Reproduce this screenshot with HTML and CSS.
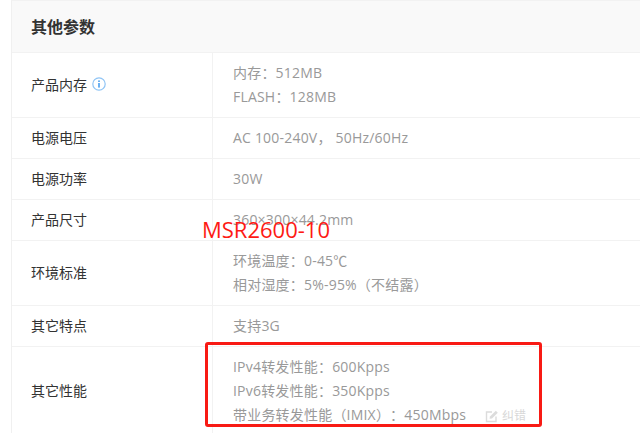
FILE: index.html
```html
<!DOCTYPE html>
<html lang="zh-CN">
<head>
<meta charset="utf-8">
<title>其他参数</title>
<link rel="stylesheet" href="styles.css">
</head>
<body>
<main class="panel">
  <h2 class="panel-title">其他参数</h2>
  <div class="row row-2">
    <div class="key">产品内存
      <svg class="info" viewBox="0 0 14 14" width="14" height="14" aria-hidden="true"><circle cx="7" cy="7" r="6.2" fill="none" stroke="#8fc4f5" stroke-width="1.2"/><rect x="6.2" y="6" width="1.6" height="4.6" fill="#4a9fee"/><rect x="6.2" y="3.4" width="1.6" height="1.6" fill="#4a9fee"/></svg>
    </div>
    <div class="val"><p>内存：512MB</p><p>FLASH：128MB</p></div>
  </div>
  <div class="row"><div class="key">电源电压</div><div class="val"><p>AC 100-240V<span class="comma">，</span>50Hz/60Hz</p></div></div>
  <div class="row"><div class="key">电源功率</div><div class="val"><p>30W</p></div></div>
  <div class="row"><div class="key">产品尺寸</div><div class="val"><p>360×300×44.2mm</p></div></div>
  <div class="row row-2"><div class="key">环境标准</div><div class="val"><p>环境温度：0-45℃</p><p>相对湿度：5%-95%（不结露）</p></div></div>
  <div class="row"><div class="key">其它特点</div><div class="val"><p>支持3G</p></div></div>
  <div class="row row-3"><div class="key">其它性能</div>
    <div class="val">
      <p>IPv4转发性能：600Kpps</p>
      <p>IPv6转发性能：350Kpps</p>
      <p class="last">带业务转发性能（IMIX）：450Mbps
        <span class="fix"><svg viewBox="0 0 14 14" width="14" height="14" aria-hidden="true"><path d="M11 7.5V12.5H1.5V3H7" fill="none" stroke="#dcdcdc" stroke-width="1.4"/><path d="M4.5 9.8 5 7.5 10.8 1.7 12.8 3.7 7 9.4Z" fill="#dcdcdc"/></svg>纠错</span>
      </p>
    </div>
  </div>
</main>
<div class="note-label">MSR2600-10</div>
<div class="note-box"></div>
</body>
</html>
```
FILE: styles.css
```css
html, body { margin: 0; padding: 0; }
body {
  width: 640px;
  height: 433px;
  overflow: hidden;
  position: relative;
  background: #fff;
  font-family: "Open Sans", "Noto Sans CJK SC", sans-serif;
  text-spacing-trim: space-all;
}
.panel {
  margin-left: 11px;
  border-left: 1px solid #f0f0f0;
  border-top: 1px solid #f2f2f2;
}
.panel-title {
  margin: 0;
  height: 51px;
  line-height: 53px;
  padding-left: 19px;
  font-size: 16px;
  font-weight: 700;
  color: #333;
  background: #f9f9f9;
  border-bottom: 1px solid #f2f2f2;
}
.row {
  display: flex;
  height: 40px;
  border-bottom: 1px solid #f2f2f2;
  font-size: 14px;
}
.row-2 { height: 64px; }
.row-3 { height: 88px; border-bottom: 0; }
.key {
  width: 201px;
  box-sizing: border-box;
  flex: none;
  padding: 0 0 2px 19px;
  border-right: 1px solid #f2f2f2;
  display: flex;
  align-items: center;
  gap: 5px;
  color: #333;
}
.val {
  flex: 1;
  padding-left: 20px;
  display: flex;
  flex-direction: column;
  justify-content: center;
  color: #999;
  letter-spacing: 0.2px;
}
.val p { margin: 0; line-height: 24px; }
.comma { padding-right: 4px; }
.last { display: flex; width: 293px; justify-content: space-between; }
.fix {
  color: #d8d8d8;
  font-size: 12px;
  letter-spacing: 0;
  display: inline-flex;
  align-items: center;
  gap: 3px;
  padding-top: 1px;
}
.note-label {
  position: absolute;
  left: 202px;
  top: 213px;
  color: #fe1a14;
  font-size: 22px;
  line-height: 32px;
  white-space: nowrap;
}
.note-box {
  position: absolute;
  left: 205px;
  top: 342px;
  width: 331px;
  height: 79px;
  border: 3px solid #f81a14;
  border-radius: 3px;
}
```
